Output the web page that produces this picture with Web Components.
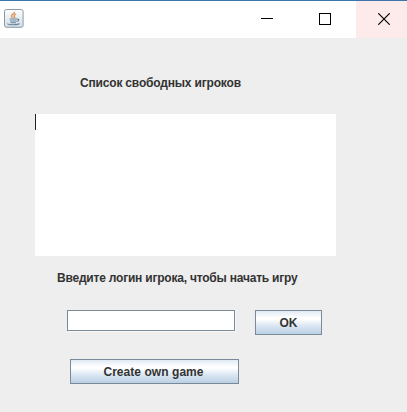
<!DOCTYPE html>
<html lang="ru">
<head>
<meta charset="utf-8">
<title>Game lobby</title>
<style>
html,body{margin:0;height:100%;overflow:hidden}
body{font:bold 12px/16px "Liberation Sans",Arial,sans-serif;color:#333}
</style>
</head>
<body>
<lobby-window></lobby-window>
<script>
const define = (name, html) => customElements.define(name, class extends HTMLElement {
  constructor() {
    super();
    this.attachShadow({ mode: 'open' }).innerHTML = html;
  }
});

define('java-icon', `
<style>:host{display:block;width:20px;height:20px}svg{display:block}</style>
<svg width="20" height="20" viewBox="0 0 20 20" fill="none">
  <defs><linearGradient id="g" x1="0" y1="0" x2="0" y2="1"><stop offset="0" stop-color="#fdfdfd"/><stop offset="1" stop-color="#d3dde6"/></linearGradient></defs>
  <rect x=".5" y=".5" width="18.6" height="17.8" rx="2" fill="url(#g)" stroke="#8b9aa5"/>
  <path d="M10.300 2.800c1 2-3.800 2.700-2.800 4.700 .3.700 1.200 1 1.200 1.500M12 5c-2 1-2.500 2-1.500 3 .4.500 0 .8-.5 1.100" stroke="#dc9a61" stroke-width="1.500"/>
  <path d="M5.500 10h7.500M6 12h6.500M13 10.200c2.500-.4 2.500 1.700-.3 2.300" stroke="#66859d" stroke-width="1.200"/>
  <path d="M3.500 14.500c0 1.600 10.500 1.600 12 0M6.500 13.700h5.500" stroke="#66859d" stroke-width="1.100"/>
</svg>`);

define('caption-button', `
<style>
:host{display:flex;align-items:center;justify-content:center;height:37px;width:58px;box-sizing:border-box;padding-bottom:1px}
:host([close]){background:#fdeaea;width:51px;padding-left:5px}
</style><slot></slot>`);

define('title-bar', `
<style>
:host{display:flex;box-sizing:border-box;height:38px;border-top:1px solid #3c74ac;background:#fff}
java-icon{margin:8px auto 0 4px}
svg{display:block}
</style>
<java-icon></java-icon>
<caption-button style="width:60px"><svg width="12" height="12" shape-rendering="crispEdges"><path d="M0 5.500h12" stroke="#000"/></svg></caption-button>
<caption-button style="width:56px"><svg width="12" height="12" shape-rendering="crispEdges"><path d="M.5.500h11v11h-11z" fill="none" stroke="#000"/></svg></caption-button>
<caption-button style="width:3px"></caption-button>
<caption-button close><svg width="12" height="12"><path d="M.3.300l11.400 11.400M11.700.300L.3 11.700" stroke="#000" stroke-width="1.200"/></svg></caption-button>`);

define('text-label', `
<style>:host{display:block;height:16px;white-space:nowrap}</style><slot></slot>`);

define('player-list', `
<style>
:host{display:block;width:301px;height:142px;background:#fff}
i{display:block;width:1px;height:16px;background:#222}
</style><i></i>`);

define('login-field', `
<style>:host{display:block;box-sizing:border-box;width:168px;height:21px;background:#fff;border:1px solid #7a8a99;box-shadow:1px 1px 0 #f8f8f8}</style>`);

define('metal-button', `
<style>
:host{display:flex;align-items:center;justify-content:center;box-sizing:border-box;height:25px;border:1px solid #7a8a99;
background:linear-gradient(#e0eaf4 0,#fff 30%,#fff 36%,#dde8f3 62%,#bbd0e5 100%)}
</style><slot></slot>`);

define('lobby-window', `
<style>
:host{display:flex;flex-direction:column;height:100vh;background:#eee}
main{display:flex;flex-direction:column;align-items:flex-start;padding:37px 0 0 35px}
.heading{margin-left:45px;letter-spacing:-.18px}
player-list{margin-top:23px}
.prompt{margin:14px 0 0 22px;letter-spacing:-.21px}
.row{display:flex;gap:20px;margin:24px 0 0 32px}
.ok{width:67px}
.create{width:169px;margin:24px 0 0 35px;letter-spacing:.05px;padding-right:2px}
</style>
<title-bar></title-bar>
<main>
  <text-label class="heading">Список свободных игроков</text-label>
  <player-list></player-list>
  <text-label class="prompt">Введите логин игрока, чтобы начать игру</text-label>
  <div class="row"><login-field></login-field><metal-button class="ok">OK</metal-button></div>
  <metal-button class="create">Create own game</metal-button>
</main>`);
</script>
</body>
</html>
